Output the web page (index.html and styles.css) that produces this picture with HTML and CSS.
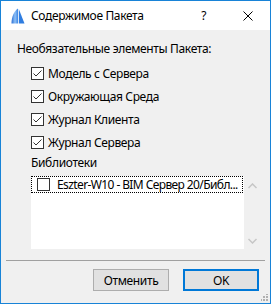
FILE: index.html
```html
<!DOCTYPE html>
<html lang="ru">
<head>
    <meta charset="UTF-8">
    <meta name="viewport" content="width=device-width, initial-scale=1.0">
    <title>Содержимое Пакета</title>
    <link rel="stylesheet" href="styles.css">
</head>
<body>
    <div class="window">
        <div class="titlebar">
            <svg class="app-icon" width="14" height="16" viewBox="0 0 14 16">
                <defs>
                    <linearGradient id="sail" x1="0" y1="0" x2="1" y2="0">
                        <stop offset="0" stop-color="#2a6fd6"/>
                        <stop offset="0.55" stop-color="#8fc0f5"/>
                        <stop offset="1" stop-color="#3b86e6"/>
                    </linearGradient>
                </defs>
                <path d="M0.5 15.5 C0.5 9 3 3 7 0.5 L7 15.5 Z" fill="url(#sail)"/>
                <path d="M7.8 1 L13.5 15.5 L7.8 15.5 Z" fill="#2f7de0"/>
            </svg>
            <span class="title">Содержимое Пакета</span>
            <span class="help">?</span>
            <svg class="close" width="10" height="10" viewBox="0 0 10 10">
                <path d="M0.5 0.5 L9.5 9.5 M9.5 0.5 L0.5 9.5" stroke="#000" stroke-width="1"/>
            </svg>
        </div>
        <div class="content">
            <div class="group-label">Необязательные элементы Пакета:</div>
            <div class="checks">
                <label class="check-row"><span class="box checked"></span>Модель с Сервера</label>
                <label class="check-row"><span class="box checked"></span>Окружающая Среда</label>
                <label class="check-row"><span class="box checked"></span>Журнал Клиента</label>
                <label class="check-row"><span class="box checked"></span>Журнал Сервера</label>
                <div class="lib-label">Библиотеки</div>
                <div class="listbox">
                    <div class="list-area">
                        <div class="list-item focused"><span class="box"></span>Eszter-W10 - BIM Сервер 20/Библ...</div>
                    </div>
                    <div class="scroll">
                        <svg width="9" height="6" viewBox="0 0 9 6"><path d="M0.5 5 L4.5 1 L8.5 5" fill="none" stroke="#c6c6c6" stroke-width="1.5"/></svg>
                        <svg width="9" height="6" viewBox="0 0 9 6"><path d="M0.5 1 L4.5 5 L8.5 1" fill="none" stroke="#c6c6c6" stroke-width="1.5"/></svg>
                    </div>
                </div>
            </div>
            <div class="separator"></div>
            <div class="buttons">
                <button class="btn">Отменить</button>
                <button class="btn default">OK</button>
            </div>
            <div class="grip"></div>
        </div>
    </div>
</body>
</html>
```
FILE: styles.css
```css
body {
    margin: 0;
    font-family: "Noto Sans", "Open Sans", sans-serif;
    font-size: 12px;
    letter-spacing: -0.35px;
    color: #000;
}
.window {
    width: 271px;
    height: 304px;
    box-sizing: border-box;
    border: 1px solid #1883d7;
    display: flex;
    flex-direction: column;
}
.titlebar {
    height: 29px;
    background: #fff;
    display: flex;
    align-items: center;
}
.app-icon {
    margin-left: 10px;
}
.title {
    margin-left: 6px;
    font-size: 12px;
}
.help {
    margin-left: auto;
    margin-right: 37px;
    font-size: 12px;
}
.close {
    margin-right: 17px;
}
.content {
    flex: 1;
    background: #f0f0f0;
    position: relative;
}
.group-label {
    margin-top: 10px;
    padding-left: 16px;
    line-height: 18px;
}
.checks {
    margin-top: 4px;
    padding-left: 30px;
}
.check-row {
    display: flex;
    align-items: center;
    height: 23px;
}
.box {
    width: 13px;
    height: 13px;
    box-sizing: border-box;
    border: 1px solid #333;
    background: #fff;
    margin-right: 4px;
    flex-shrink: 0;
}
.box.checked {
    background: #fff url("data:image/svg+xml;utf8,<svg xmlns='http://www.w3.org/2000/svg' width='11' height='11'><path d='M1.5 5.5 L4 8 L9.5 2.5' fill='none' stroke='%23333' stroke-width='1'/></svg>") no-repeat center;
}
.lib-label {
    line-height: 18px;
    margin-top: 0;
}
.listbox {
    margin-top: 4px;
    display: flex;
    height: 73px;
}
.list-area {
    width: 213px;
    background: #fff;
}
.list-item {
    height: 17px;
    display: flex;
    align-items: center;
    padding-left: 6px;
    box-sizing: border-box;
    width: 212px;
    white-space: nowrap;
    letter-spacing: -0.6px;
}
.list-item .box {
    margin-right: 7px;
}
.list-item.focused {
    outline: 1px dotted #000;
    outline-offset: -1px;
}
.scroll {
    width: 17px;
    display: flex;
    flex-direction: column;
    justify-content: space-between;
    align-items: center;
    padding: 7px 0 5px;
    box-sizing: border-box;
}
.separator {
    margin: 11px 5px 0;
    height: 1px;
    background: #a0a0a0;
}
.buttons {
    margin-top: 8px;
    display: flex;
    justify-content: flex-end;
    gap: 14px;
    padding-right: 11px;
}
.btn {
    width: 76px;
    height: 22px;
    box-sizing: border-box;
    border: 1px solid #adadad;
    background: #e1e1e1;
    font-family: inherit;
    font-size: 12px;
    letter-spacing: inherit;
    color: #000;
    padding: 0;
}
.btn.default {
    border: 2px solid #0078d7;
}
.grip {
    position: absolute;
    right: 1px;
    bottom: 1px;
    width: 8px;
    height: 8px;
    background:
        radial-gradient(circle at 6px 6px, #b0b0b0 1px, transparent 1.2px),
        radial-gradient(circle at 3px 6px, #b0b0b0 1px, transparent 1.2px),
        radial-gradient(circle at 6px 3px, #b0b0b0 1px, transparent 1.2px),
        radial-gradient(circle at 0px 6px, #b0b0b0 1px, transparent 1.2px),
        radial-gradient(circle at 3px 3px, #b0b0b0 1px, transparent 1.2px),
        radial-gradient(circle at 6px 0px, #b0b0b0 1px, transparent 1.2px);
}
```
